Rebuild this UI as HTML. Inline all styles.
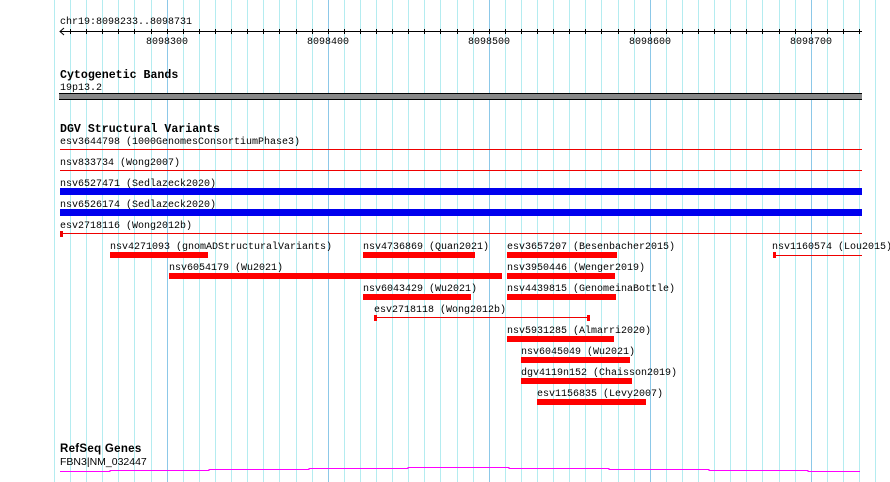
<!DOCTYPE html><html><head><style>body{margin:0;background:#fff}svg{display:block}text{font-family:"Liberation Mono",monospace;font-size:10px;fill:#000}.b{font-weight:bold;font-size:11.6px}</style></head><body>
<svg width="890" height="482" xmlns="http://www.w3.org/2000/svg">
<g id="grid" stroke="#b4ecf0" stroke-width="1">
<script></script>
</g>
<g stroke="#b4ecf0">
<line x1="54.5" y1="0" x2="54.5" y2="482"/><line x1="70.5" y1="0" x2="70.5" y2="482"/><line x1="86.5" y1="0" x2="86.5" y2="482"/><line x1="102.5" y1="0" x2="102.5" y2="482"/><line x1="118.5" y1="0" x2="118.5" y2="482"/><line x1="134.5" y1="0" x2="134.5" y2="482"/><line x1="151.5" y1="0" x2="151.5" y2="482"/>
<line x1="183.5" y1="0" x2="183.5" y2="482"/><line x1="199.5" y1="0" x2="199.5" y2="482"/><line x1="215.5" y1="0" x2="215.5" y2="482"/><line x1="231.5" y1="0" x2="231.5" y2="482"/><line x1="247.5" y1="0" x2="247.5" y2="482"/><line x1="263.5" y1="0" x2="263.5" y2="482"/><line x1="279.5" y1="0" x2="279.5" y2="482"/><line x1="296.5" y1="0" x2="296.5" y2="482"/><line x1="312.5" y1="0" x2="312.5" y2="482"/>
<line x1="344.5" y1="0" x2="344.5" y2="482"/><line x1="360.5" y1="0" x2="360.5" y2="482"/><line x1="376.5" y1="0" x2="376.5" y2="482"/><line x1="392.5" y1="0" x2="392.5" y2="482"/><line x1="408.5" y1="0" x2="408.5" y2="482"/><line x1="424.5" y1="0" x2="424.5" y2="482"/><line x1="440.5" y1="0" x2="440.5" y2="482"/><line x1="457.5" y1="0" x2="457.5" y2="482"/><line x1="473.5" y1="0" x2="473.5" y2="482"/>
<line x1="505.5" y1="0" x2="505.5" y2="482"/><line x1="521.5" y1="0" x2="521.5" y2="482"/><line x1="537.5" y1="0" x2="537.5" y2="482"/><line x1="553.5" y1="0" x2="553.5" y2="482"/><line x1="569.5" y1="0" x2="569.5" y2="482"/><line x1="585.5" y1="0" x2="585.5" y2="482"/><line x1="601.5" y1="0" x2="601.5" y2="482"/><line x1="618.5" y1="0" x2="618.5" y2="482"/><line x1="634.5" y1="0" x2="634.5" y2="482"/>
<line x1="666.5" y1="0" x2="666.5" y2="482"/><line x1="682.5" y1="0" x2="682.5" y2="482"/><line x1="698.5" y1="0" x2="698.5" y2="482"/><line x1="714.5" y1="0" x2="714.5" y2="482"/><line x1="730.5" y1="0" x2="730.5" y2="482"/><line x1="746.5" y1="0" x2="746.5" y2="482"/><line x1="762.5" y1="0" x2="762.5" y2="482"/><line x1="779.5" y1="0" x2="779.5" y2="482"/><line x1="795.5" y1="0" x2="795.5" y2="482"/>
<line x1="827.5" y1="0" x2="827.5" y2="482"/><line x1="843.5" y1="0" x2="843.5" y2="482"/><line x1="859.5" y1="0" x2="859.5" y2="482"/><line x1="875.5" y1="0" x2="875.5" y2="482"/>
</g>
<g stroke="#8cc8e8"><line x1="167.5" y1="0" x2="167.5" y2="482"/><line x1="328.5" y1="0" x2="328.5" y2="482"/><line x1="489.5" y1="0" x2="489.5" y2="482"/><line x1="650.5" y1="0" x2="650.5" y2="482"/><line x1="811.5" y1="0" x2="811.5" y2="482"/></g>
<!-- ruler -->
<text x="60" y="24">chr19:8098233..8098731</text>
<g stroke="#000"><line x1="60" y1="31.5" x2="862" y2="31.5"/><polyline points="64,28 60,31.5 64,35" fill="none"/>
<path d="M70.5 29v5M86.5 29v5M102.5 29v5M118.5 29v5M134.5 29v5M151.5 29v5M167.5 29v5M183.5 29v5M199.5 29v5M215.5 29v5M231.5 29v5M247.5 29v5M263.5 29v5M279.5 29v5M296.5 29v5M312.5 29v5M328.5 29v5M344.5 29v5M360.5 29v5M376.5 29v5M392.5 29v5M408.5 29v5M424.5 29v5M440.5 29v5M457.5 29v5M473.5 29v5M489.5 29v5M505.5 29v5M521.5 29v5M537.5 29v5M553.5 29v5M569.5 29v5M585.5 29v5M601.5 29v5M618.5 29v5M634.5 29v5M650.5 29v5M666.5 29v5M682.5 29v5M698.5 29v5M714.5 29v5M730.5 29v5M746.5 29v5M762.5 29v5M779.5 29v5M795.5 29v5M811.5 29v5M827.5 29v5M843.5 29v5M859.5 29v5"/></g>
<g text-anchor="middle"><text x="167" y="44">8098300</text><text x="328" y="44">8098400</text><text x="489" y="44">8098500</text><text x="650" y="44">8098600</text><text x="811" y="44">8098700</text></g>
<!-- cyto -->
<text class="b" x="60" y="78">Cytogenetic Bands</text>
<text x="60" y="90">19p13.2</text>
<rect x="59" y="93" width="803" height="7" fill="#888"/><line x1="59" y1="93.5" x2="862" y2="93.5" stroke="#000"/><line x1="59" y1="99.5" x2="862" y2="99.5" stroke="#000"/>
<!-- DGV -->
<text class="b" x="60" y="132">DGV Structural Variants</text>
<text x="60" y="144">esv3644798 (1000GenomesConsortiumPhase3)</text>
<line x1="60" y1="149.5" x2="862" y2="149.5" stroke="#e00"/>
<text x="60" y="165">nsv833734 (Wong2007)</text>
<line x1="60" y1="170.5" x2="862" y2="170.5" stroke="#e00"/>
<text x="60" y="186">nsv6527471 (Sedlazeck2020)</text>
<rect x="60" y="188" width="802" height="7" fill="#0000ee"/>
<text x="60" y="207">nsv6526174 (Sedlazeck2020)</text>
<rect x="60" y="209" width="802" height="7" fill="#0000ee"/>
<text x="60" y="228">esv2718116 (Wong2012b)</text>
<line x1="60" y1="233.5" x2="862" y2="233.5" stroke="#e00"/><rect x="60" y="231" width="3" height="6" fill="#e00"/>
<g fill="#f00">
<text x="110" y="249">nsv4271093 (gnomADStructuralVariants)</text><rect x="110" y="252" width="98" height="6"/>
<text x="363" y="249">nsv4736869 (Quan2021)</text><rect x="363" y="252" width="112" height="6"/>
<text x="507" y="249">esv3657207 (Besenbacher2015)</text><rect x="507" y="252" width="110" height="6"/>
<text x="772" y="249">nsv1160574 (Lou2015)</text><line x1="773" y1="255.5" x2="862" y2="255.5" stroke="#e00"/><rect x="773" y="252" width="3" height="6"/>
<text x="169" y="270">nsv6054179 (Wu2021)</text><rect x="169" y="273" width="333" height="6"/>
<text x="507" y="270">nsv3950446 (Wenger2019)</text><rect x="507" y="273" width="108" height="6"/>
<text x="363" y="291">nsv6043429 (Wu2021)</text><rect x="363" y="294" width="108" height="6"/>
<text x="507" y="291">nsv4439815 (GenomeinaBottle)</text><rect x="507" y="294" width="109" height="6"/>
<text x="374" y="312">esv2718118 (Wong2012b)</text><line x1="375" y1="317.5" x2="590" y2="317.5" stroke="#e00"/><rect x="374" y="315" width="3" height="6"/><rect x="587" y="315" width="3" height="6"/>
<text x="507" y="333">nsv5931285 (Almarri2020)</text><rect x="507" y="336" width="107" height="6"/>
<text x="521" y="354">nsv6045049 (Wu2021)</text><rect x="521" y="357" width="109" height="6"/>
<text x="521" y="375">dgv4119n152 (Chaisson2019)</text><rect x="521" y="378" width="111" height="6"/>
<text x="537" y="396">esv1156835 (Levy2007)</text><rect x="537" y="399" width="109" height="6"/>
</g>
<text class="b" x="60" y="452" style="font-family:'Liberation Sans',sans-serif;font-size:11.5px;letter-spacing:0.3px">RefSeq Genes</text>
<text x="60" y="465" style="font-family:'Liberation Sans',sans-serif;font-size:10.5px">FBN3|NM_032447</text>
<polyline fill="none" stroke="#f0f" stroke-width="1" points="60,471.5 110,471.5 110,470.5 209,470.5 209,469.5 309,469.5 309,468.5 408,468.5 408,467.5 509,467.5 509,468.5 609,468.5 609,469.5 709,469.5 709,470.5 808,470.5 808,471.5 860,471.5"/>
</svg></body></html>
